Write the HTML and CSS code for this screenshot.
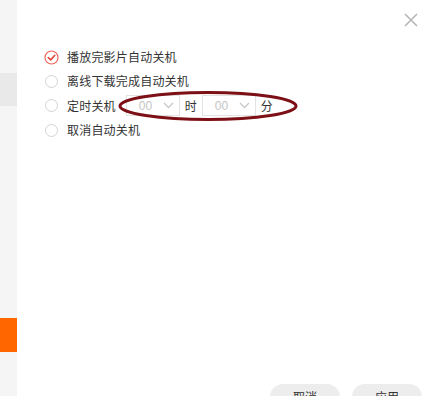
FILE: index.html
```html
<!DOCTYPE html>
<html>
<head>
<meta charset="utf-8">
<link rel="stylesheet" href="styles.css">
</head>
<body>
<div class="page">
  <div class="sidebar">
    <div class="side-gap1"></div>
    <div class="side-item"></div>
    <div class="side-gap2"></div>
    <div class="side-active"></div>
  </div>
  <div class="main">
    <div class="close">
      <svg width="14" height="14" viewBox="0 0 14 14"><path d="M1 1L13 13M13 1L1 13" stroke="#b5b5b5" stroke-width="1.5" fill="none"/></svg>
    </div>
    <div class="options">
      <div class="row">
        <span class="radio checked">
          <svg width="15" height="15" viewBox="0 0 15 15"><circle cx="7.5" cy="7.5" r="6.5" stroke="#f0655a" stroke-width="1.2" fill="#fff"/><path d="M4.3 7.6L6.7 9.9L10.8 5.3" stroke="#e8483c" stroke-width="1.6" fill="none" stroke-linecap="round" stroke-linejoin="round"/></svg>
        </span>
        <span class="label">播放完影片自动关机</span>
      </div>
      <div class="row">
        <span class="radio"></span>
        <span class="label">离线下载完成自动关机</span>
      </div>
      <div class="row">
        <span class="radio"></span>
        <span class="label">定时关机</span>
        <div class="timer">
          <div class="select"><span>00</span>
            <svg width="11" height="7" viewBox="0 0 11 7"><path d="M1 1L5.5 5.5L10 1" stroke="#c8c8c8" stroke-width="1.3" fill="none"/></svg>
          </div>
          <span class="unit">时</span>
          <div class="select"><span>00</span>
            <svg width="11" height="7" viewBox="0 0 11 7"><path d="M1 1L5.5 5.5L10 1" stroke="#c8c8c8" stroke-width="1.3" fill="none"/></svg>
          </div>
          <span class="unit">分</span>
          <svg class="ellipse" width="182" height="34" viewBox="0 0 182 34"><ellipse cx="91" cy="17" rx="88" ry="13.5" stroke="#7d1016" stroke-width="3" fill="none"/></svg>
        </div>
      </div>
      <div class="row">
        <span class="radio"></span>
        <span class="label">取消自动关机</span>
      </div>
    </div>
    <div class="actions">
      <button class="btn">取消</button>
      <button class="btn">应用</button>
    </div>
  </div>
</div>
</body>
</html>
```
FILE: styles.css
```css
html, body {
  margin: 0;
  padding: 0;
  background: #fff;
}
body {
  width: 423px;
  height: 396px;
  overflow: hidden;
  font-family: "Noto Sans CJK SC", "Liberation Sans", sans-serif;
  color: #333;
}
.page {
  display: flex;
  height: 396px;
}
.sidebar {
  width: 17px;
  flex: none;
  background: #f5f5f5;
  display: flex;
  flex-direction: column;
}
.side-gap1 { height: 73px; }
.side-item { height: 33px; background: #e9e9e9; }
.side-gap2 { height: 212px; }
.side-active { height: 34px; background: #ff6600; }
.main {
  flex: 1;
  position: relative;
  display: flex;
  flex-direction: column;
}
.close {
  position: absolute;
  top: 13px;
  right: 5px;
  width: 14px;
  height: 14px;
}
.close svg { display: block; }
.options {
  padding: 49px 0 0 28px;
  display: flex;
  flex-direction: column;
  gap: 8.4px;
}
.row {
  display: flex;
  align-items: center;
  height: 16px;
  font-size: 12px;
}
.radio {
  width: 13px;
  height: 13px;
  border: 1px solid #d3d3d3;
  border-radius: 50%;
  box-sizing: border-box;
  flex: none;
  margin-right: 9px;
  background: #fff;
}
.radio.checked {
  border: none;
  width: 15px;
  height: 15px;
  margin-left: -1px;
  margin-right: 8px;
}
.radio.checked svg { display: block; }
.label {
  line-height: 16px;
  letter-spacing: 0.2px;
}
.timer {
  position: relative;
  display: flex;
  align-items: center;
  margin-left: 10px;
}
.select {
  width: 54px;
  height: 21px;
  box-sizing: border-box;
  border: 1px solid #e3e3e3;
  display: flex;
  align-items: center;
  justify-content: space-between;
  padding: 0 5px 0 12px;
  color: #c4c4c4;
  font-family: "Liberation Sans", sans-serif;
  font-size: 12px;
  background: #fff;
}
.unit {
  margin: 0 5px;
}
.ellipse {
  position: absolute;
  left: -9px;
  top: -6px;
}
.actions {
  margin-top: auto;
  display: flex;
  justify-content: flex-end;
  gap: 12px;
  margin-right: 1px;
  margin-bottom: -14px;
}
.btn {
  width: 70px;
  height: 26px;
  border: none;
  border-radius: 13px;
  background: #ededed;
  color: #333;
  font-family: "Noto Sans CJK SC", sans-serif;
  font-size: 12px;
  padding: 0;
  line-height: 20px;
  display: flex;
  justify-content: center;
  align-items: flex-start;
  padding-top: 3px;
  box-sizing: border-box;
}
```
